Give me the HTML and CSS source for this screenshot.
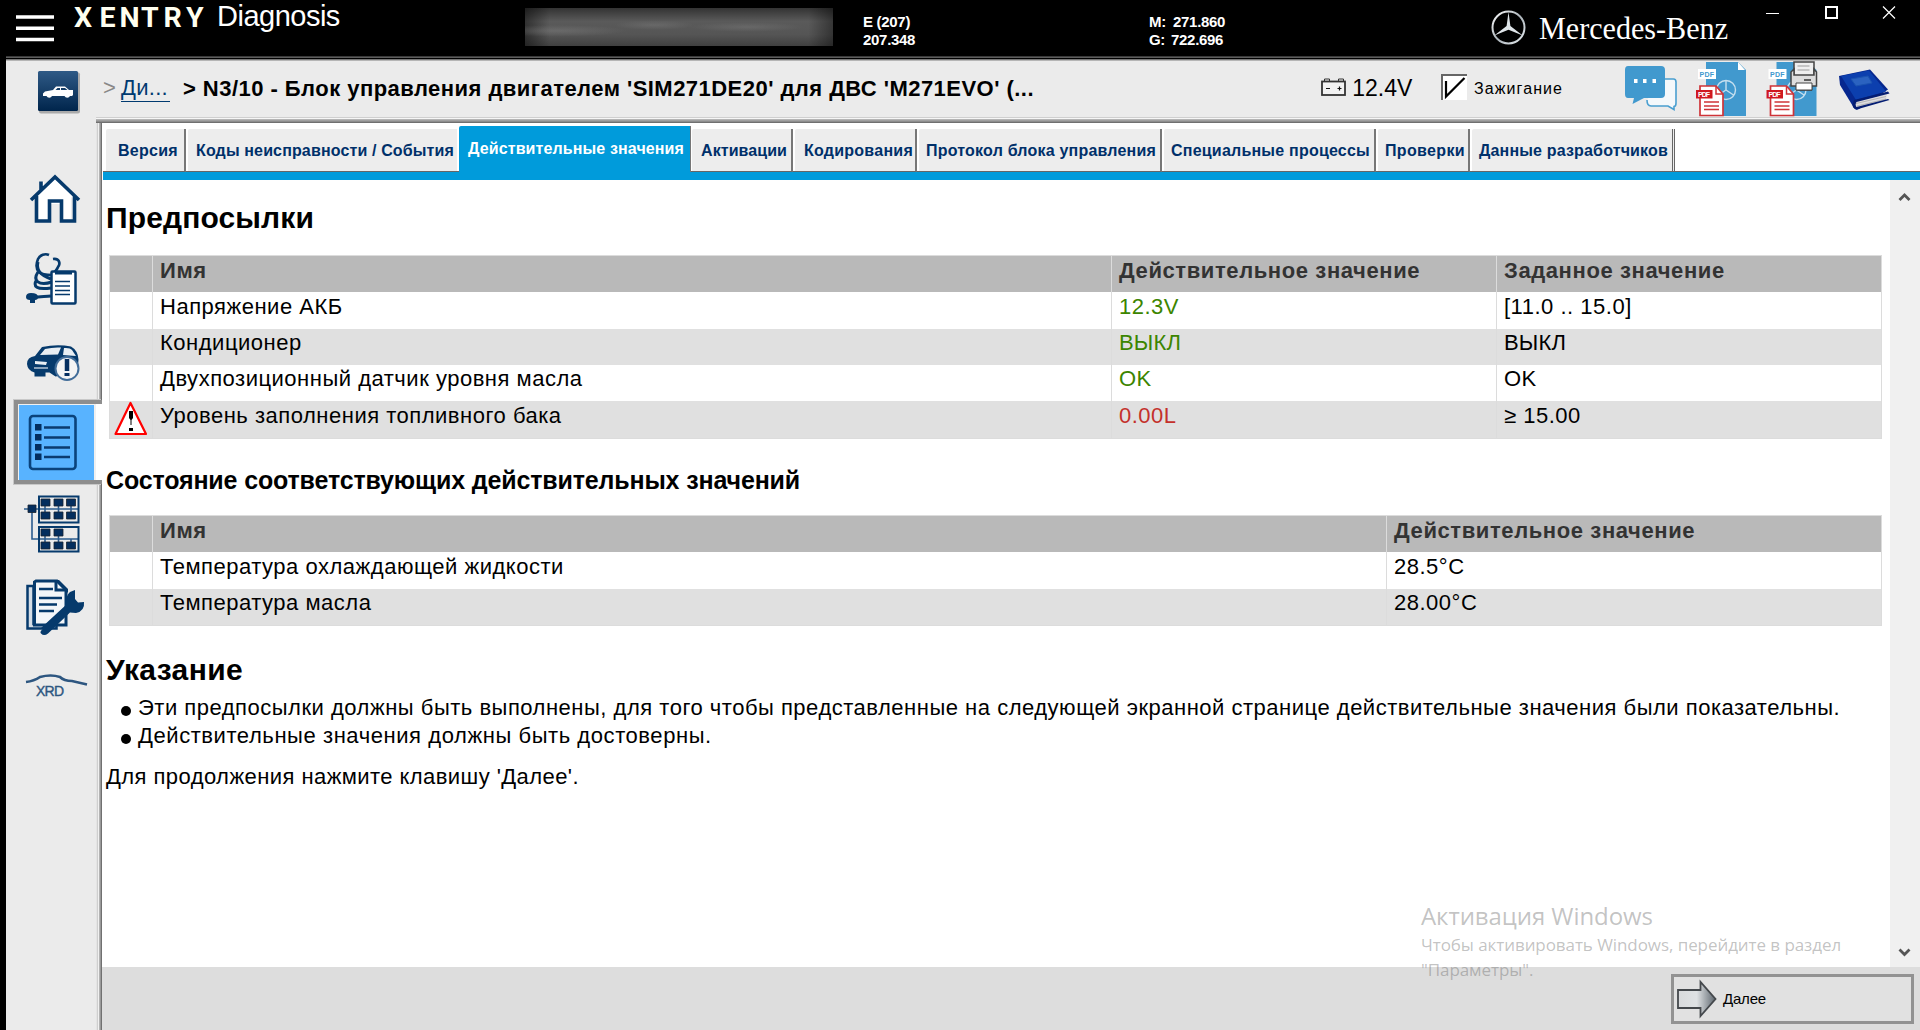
FILE: index.html
```html
<!DOCTYPE html>
<html lang="ru">
<head>
<meta charset="utf-8">
<title>XENTRY Diagnosis</title>
<link rel="stylesheet" href="styles.css">
</head>
<body>
<header class="topbar">
  <svg class="brand" width="213" height="56" viewBox="0 0 213 56">
    <path d="M16 17h38M16 28.3h38M16 39.5h38" stroke="#fff" stroke-width="3.4"/>
    <text class="xentry" y="26.5" x="74 99.5 119.5 141 163.5 186">XENTRY</text>
  </svg>
  <span class="product">Diagnosis</span>
  <span class="redacted"></span>
  <div class="vehicle">E (207)<br>207.348</div>
  <div class="aggregates"><span class="key">M:</span>271.860<br><span class="key g">G:</span>722.696</div>
  <svg class="maker" width="246" height="56" viewBox="1485 0 246 56">
    <defs><linearGradient id="ring" x1="0" y1="0" x2="1" y2="1"><stop offset="0" stop-color="#fff"/><stop offset=".5" stop-color="#aab2b8"/><stop offset="1" stop-color="#e8eef2"/></linearGradient></defs>
    <circle cx="1508.500" cy="27.500" r="16" fill="none" stroke="url(#ring)" stroke-width="2"/>
    <path d="M1508.500 12l1.900 14 12.300 9.500-14.200-5.800-14.200 5.800 12.300-9.500z" fill="#dfe5e9"/>
    <text class="mb" x="1539" y="38.500" textLength="189" lengthAdjust="spacingAndGlyphs">Mercedes-Benz</text>
  </svg>
  <svg class="winbtns" width="160" height="56" viewBox="1760 0 160 56">
    <path d="M1766 13.500h13" stroke="#fff"/>
    <rect x="1826" y="7" width="11" height="11" fill="none" stroke="#fff" stroke-width="2"/>
    <path d="M1883 6.500l12 12M1895 6.500l-12 12" stroke="#fff" stroke-width="1.200"/>
  </svg>
</header>
<div class="shell">
  <div class="crumbs">
    <svg class="carbtn" width="90" height="56" viewBox="6 61 90 56">
      <defs><linearGradient id="cb" x1="0" y1="0" x2="0" y2="1"><stop offset="0" stop-color="#2f5a86"/><stop offset="1" stop-color="#00254c"/></linearGradient></defs>
      <rect x="39" y="72.500" width="41" height="41" rx="2" fill="#aaa"/>
      <rect x="38" y="71" width="40" height="40" rx="1.500" fill="url(#cb)"/>
      <path d="M43 96v-2.500l2-2 8-1.500 3-3.500h9l4 3.500h4v5l-1 1h-2a3 3 0 0 1-5.500 0H52a3 3 0 0 1-5.500 0z" fill="#fff"/>
      <path d="M55.500 90l2-2h2.500v2zM61 88h4l2.500 2H61z" fill="#123c66"/>
    </svg>
    <span class="sep">&gt;</span><a class="crumb-link">Ди...</a>
    <span class="crumb-current">&gt; N3/10 - Блок управления двигателем 'SIM271DE20' для ДВС 'M271EVO' (...</span>
    <svg class="battery" width="28" height="20" viewBox="1320 78 28 20">
      <path d="M1324.500 81v-2h5v2M1338.500 81v-2h5v2" fill="none" stroke="#333"/>
      <rect x="1322" y="81.500" width="23" height="13.500" fill="#f2f2f2" stroke="#333" stroke-width="1.800"/>
      <path d="M1326 88.500h4M1337.500 88.500h4M1339.500 86.500v4" stroke="#111" stroke-width="1.200"/>
    </svg>
    <span class="volt">12.4V</span>
    <svg class="check" width="28" height="28" viewBox="1440 73 28 28">
      <rect x="1441" y="74" width="26" height="26" fill="#fff"/>
      <path d="M1442 100V75H1467" fill="none" stroke="#666" stroke-width="2"/>
      <path d="M1446 81v15.500L1464.500 78" fill="none" stroke="#000" stroke-width="2.200"/>
    </svg>
    <span class="ign">Зажигание</span>
    <svg class="tools" width="300" height="56" viewBox="1620 61 300 56">
      <path d="M1663 79h10.500q2.500 0 2.500 3v21q0 3.500-2 3.500v3l-6-3.500h-17q-4 0-4-6" fill="#f4f8fb" stroke="#4a9fd0" stroke-width="1.600"/>
      <path d="M1628 66h33q4 0 4 4v24q0 4-4 4h-17l-11.500 6 1.500-6h-6q-3 0-3-4V70q0-4 3-4z" fill="#4199ce"/>
      <path d="M1634 79h3.500v4h-3.500zM1643 79h3.500v4h-3.500zM1652.500 79h3.500v4h-3.500z" fill="#fff"/>
      <g id="report">
        <path d="M1706 62h32l8 8v46h-40z" fill="#4199ce"/>
        <path d="M1738 62v8h7z" fill="#fff"/>
        <circle cx="1726" cy="90" r="9.500" fill="none" stroke="#c5dfef" stroke-width="1.400"/>
        <path d="M1726 81v9l-7.500 5M1726 90l7.500 5" fill="none" stroke="#c5dfef" stroke-width="1.400"/>
        <path d="M1698 69h18v10h-18z" fill="#fff"/>
        <text x="1699.500" y="76.500" class="pdf blue" textLength="14.500">PDF</text>
        <path d="M1700 86h16l7 8v21.500h-23z" fill="#fff" stroke="#cf3439" stroke-width="1.700"/>
        <path d="M1716 86v8h7" fill="none" stroke="#cf3439" stroke-width="1.500"/>
        <path d="M1696 90h16.500v8.500H1696z" fill="#d01820"/>
        <text x="1698" y="97" class="pdf" textLength="12">PDF</text>
        <path d="M1704 102h15M1704 106h15M1704 109.500h15" stroke="#cf3439" stroke-width="1.500"/>
      </g>
      <use href="#report" x="70.500"/>
      <path d="M1794 62h20v17h-20z" fill="#eee" stroke="#444" stroke-width="1.500"/>
      <path d="M1797.500 66h12M1797.500 70h12" stroke="#999" stroke-width="1.200"/>
      <path d="M1794 69v6h20v-6l2.500 3v14h-5v4h-15v-4h-5.500V72z" fill="#ddd" stroke="#444" stroke-width="1.500"/>
      <path d="M1796 83h16v7h-16z" fill="#fff" stroke="#444"/><path d="M1804 80h7" stroke="#333" stroke-width="1.500"/>
      <path d="M1839 76l31-6.500 18 20-29 19.500q-3 2-5-1l-14-23z" fill="#06278f"/>
      <path d="M1841 76l28-5.500 17 21-30 8.500z" fill="#0c3fae"/>
      <path d="M1851 79l17-3 4 7-16 3z" fill="#2b62c0" stroke="#1b53b0"/>
      <path d="M1856 101l31-7-1 6-29 8q-3-3-1-7z" fill="#dcdce0"/>
      <path d="M1856 103.500l30-7M1857 106l29-7" stroke="#aaa" stroke-width=".8"/>
      <path d="M1854 100l34-8.500 1.500 2-33 8.500q-2 3 0 5l31.500-8 1.500 1-33 9.500q-4-1-4-5z" fill="#041d72"/>
    </svg>
  </div>
  <div class="body">
    <nav class="side">
      <svg height="82" viewBox="6 158 90 82"><path d="M40 192v-10h4v6l11-11 20 20-1.500 2-2.500-2v24H61.500v-17h-12v17H36.500v-24L32 200l-1-1.500z" fill="#fff"/><path d="M31 200l24-23 24 23M41 190v-8.500M36.500 196v25h13V201h12v20h13V196" fill="none" stroke="#063a6c" stroke-width="3.600"/></svg>
      <svg height="82" viewBox="6 240 90 82"><g fill="none" stroke="#063a6c"><path d="M49 255c-4-2-9 0-11 4-2 5-2 10 1 13 3 3 8 3 13 3" stroke-width="2.600"/><path d="M53 259c6-1 8 4 5 8-1 3-3 4-4 6" stroke-width="2.600"/><path d="M38 262c-2 8 2 13 13 17M38 272c-6 9 1 14 14 10M37 279c-5 8 0 11 14 9M34 298c5-2 11-1 17-2" stroke-width="3"/></g><path d="M26 297q0-4 5-4 7 0 7 4 0 3-3 3v3h-5v-3q-4 0-4-3z" fill="#063a6c"/><rect x="51.500" y="271.500" width="24" height="32" rx="1" fill="#fff" stroke="#063a6c" stroke-width="2.500"/><path d="M55 271h17v3.500H55z" fill="#063a6c"/><path d="M55 281.500h15M55 286h15M55 290.500h15M55 294.500h15" stroke="#063a6c" stroke-width="1.500"/></svg>
      <svg height="75" viewBox="6 322 90 75"><path d="M27 364q0-7 8-8l7-9q15-3 29-.5 7 4 7.500 13l-1 13-22 4-6-4h-4v4h-11v-4q-7-2-7.500-8.500z" fill="#063a6c"/><path d="M40 355l5-6q8-2 16-1.500l-3 7zM64 348q6-.5 8 2l4 6-13-1zM35 361l12 1-1 3-11-1z" fill="#e8eef3"/><path d="M34 368h14" stroke="#dfe7ee" stroke-width="1.200"/><circle cx="67" cy="368.500" r="11.500" fill="#f4f4f4" stroke="#426d99" stroke-width="2"/><path d="M67 359v12" stroke="#062f60" stroke-width="4.500"/><path d="M64.500 374.500h5" stroke="#062f60" stroke-width="3"/></svg>
      <div class="selected"><svg width="75" height="75" viewBox="19 405 75 75"><rect x="30" y="416" width="45.500" height="53" rx="3" fill="none" stroke="#0a437c" stroke-width="2.600"/><path d="M35 424h6.500v6.500H35zM35 434h6.500v6.500H35zM35 444h6.500v6.500H35zM35 453.500h6.500v6.500H35z" fill="#042e5e"/><path d="M44 427.500h26M44 437.500h26M44 447.500h26M44 457h26" stroke="#0a3b70" stroke-width="2.600"/></svg></div>
      <svg height="82" viewBox="6 487 90 82"><path d="M24 509h54M32 509v30h46M45 500v14M58.500 500v14M71 500v14M45 530v14M58.500 530v14M71 539v5" stroke="#2d5d8f" stroke-width="1.600" fill="none"/><g fill="none" stroke="#063a6c" stroke-width="2"><rect x="39" y="496.500" width="39.500" height="26"/><rect x="39" y="527" width="39.500" height="24.500"/></g><path d="M28 505h8v7.500h-8zM41 499h9v7h-9zM54 499h9v7h-9zM66.500 499h9v7h-9zM41 512h9v7h-9zM54 512h9v7h-9zM66.500 512h9v7h-9zM41 529h9v7h-9zM54 529h9v7h-9zM41 542h9v7h-9zM54 542h9v7h-9zM66.500 542h9v7h-9z" fill="#042e5e" stroke="#1a2530" stroke-width=".8"/></svg>
      <svg height="82" viewBox="6 569 90 82"><path d="M27.500 586h6v38h23v4.500h-29z" fill="#d4dde6" stroke="#063a6c" stroke-width="2.500"/><path d="M36 581h21l9 9v35H34.500V582z" fill="#f3f6f9" stroke="#063a6c" stroke-width="3"/><path d="M55 580l13 13v-4l-9-9z" fill="#063a6c"/><path d="M56 580v10h10" fill="none" stroke="#063a6c" stroke-width="3"/><path d="M39 589h14M39 598h23M39 604.500h18M39 611h15" stroke="#063a6c" stroke-width="2.400"/><path d="M41 628l26-24q-2-8 3-12l5-2v9l3 3.500 6-.5q1 9-8 11l-6-.5-22 21q-4 3-7 0-2-2 3-5.500z" fill="#063a6c"/></svg>
      <svg height="82" viewBox="6 651 90 82"><path d="M26 682q8-1 14-5 11-3 20 0 4 4 12 4l15 3.500" fill="none" stroke="#2d5680" stroke-width="2.600"/><text class="xrd" x="36" y="696" textLength="28">XRD</text></svg>
    </nav>
    <main class="panel">
      <div class="tabs">
        <a class="tab t1">Версия</a><a class="tab t2">Коды неисправности / События</a><a class="tab active">Действительные значения</a><a class="tab t4">Активации</a><a class="tab t5">Кодирования</a><a class="tab t6">Протокол блока управления</a><a class="tab t7">Специальные процессы</a><a class="tab t8">Проверки</a><a class="tab t9">Данные разработчиков</a>
      </div>
      <div class="view">
        <div class="content">
          <h1>Предпосылки</h1>
          <table class="grid">
            <colgroup><col class="c-icon"><col class="c-name"><col class="c-val"><col></colgroup>
            <tr class="head"><th></th><th>Имя</th><th>Действительное значение</th><th>Заданное значение</th></tr>
            <tr class="tall"><td></td><td>Напряжение АКБ</td><td class="ok">12.3V</td><td>[11.0 .. 15.0]</td></tr>
            <tr class="alt"><td></td><td>Кондиционер</td><td class="ok caps">ВЫКЛ</td><td class="caps">ВЫКЛ</td></tr>
            <tr><td></td><td>Двухпозиционный датчик уровня масла</td><td class="ok">OK</td><td>OK</td></tr>
            <tr class="alt tall"><td class="warn"><svg width="36" height="36" viewBox="113 401 36 36"><path d="M130.500 403L146 434H115.500z" fill="#fff" stroke="#f00" stroke-width="2.200" stroke-linejoin="round"/><path d="M129 411h4v7l-1.500 2v5h-1v-5l-1.500-2zM129 428h4v3h-4z" fill="#000"/></svg></td><td>Уровень заполнения топливного бака</td><td class="bad">0.00L</td><td>≥ 15.00</td></tr>
          </table>
          <h2>Состояние соответствующих действительных значений</h2>
          <table class="grid">
            <colgroup><col class="c-icon"><col class="c-wide"><col></colgroup>
            <tr class="head"><th></th><th>Имя</th><th>Действительное значение</th></tr>
            <tr class="tall"><td></td><td>Температура охлаждающей жидкости</td><td>28.5°C</td></tr>
            <tr class="alt"><td></td><td>Температура масла</td><td>28.00°C</td></tr>
          </table>
          <h1 class="note">Указание</h1>
          <ul>
            <li>Эти предпосылки должны быть выполнены, для того чтобы представленные на следующей экранной странице действительные значения были показательны.</li>
            <li class="second">Действительные значения должны быть достоверны.</li>
          </ul>
          <p>Для продолжения нажмите клавишу 'Далее'.</p>
        </div>
        <div class="scroll">
          <svg width="30" height="30" viewBox="0 0 30 30"><path d="M9.500 20l5-5 5 5" fill="none" stroke="#555" stroke-width="2.800"/></svg>
          <svg width="30" height="30" viewBox="0 0 30 30"><path d="M9.500 12.500l5 5 5-5" fill="none" stroke="#555" stroke-width="2.800"/></svg>
        </div>
      </div>
      <footer class="foot">
        <button class="next"><svg width="42" height="42" viewBox="1675 978 42 42"><defs><linearGradient id="ar"><stop offset="0" stop-color="#d8dadc"/><stop offset=".5" stop-color="#dfe2e4"/><stop offset="1" stop-color="#5d666e"/></linearGradient></defs><path d="M1678 990h22.500v-8l15 17-15 17v-8H1678z" fill="url(#ar)" stroke="#44484c" stroke-width="1.800"/></svg><span>Далее</span></button>
      </footer>
    </main>
  </div>
</div>
<div class="activation"><div class="big">Активация Windows</div>Чтобы активировать Windows, перейдите в раздел<br>"Параметры".</div>
</body>
</html>
```
FILE: styles.css
```css
* { box-sizing: border-box; }
body {
  margin: 0; width: 1920px; height: 1030px; overflow: hidden;
  background: #000; color: #000; position: relative;
  font-family: "Liberation Sans", Arial, sans-serif;
  display: flex; flex-direction: column;
}
svg { display: block; flex: none; overflow: visible; }
h1, h2, p, ul { margin: 0; padding: 0; }

.topbar { height: 56px; display: flex; color: #fff; flex: none; }
.xentry { font: bold 28.5px Roboto, sans-serif; fill: #fffff0; }
.product { width: 312px; padding-left: 4px; font-size: 29px; letter-spacing: -0.5px; line-height: 33px; }
.redacted {
  width: 308px; height: 38px; margin-top: 8px;
  background:
    radial-gradient(ellipse at 10% 60%, rgba(150, 150, 150, .3), transparent 18%),
    radial-gradient(ellipse at 42% 45%, rgba(150, 150, 150, .25), transparent 16%),
    radial-gradient(ellipse at 72% 50%, rgba(150, 150, 150, .25), transparent 18%),
    linear-gradient(to right, rgba(0, 0, 0, .45), transparent 8% 92%, rgba(0, 0, 0, .4)),
    linear-gradient(#333, #5a5a5a 35%, #555 70%, #404040);
}
.vehicle, .aggregates { font-weight: bold; font-size: 15px; line-height: 18px; padding-top: 13px; letter-spacing: -0.3px; }
.vehicle { width: 286px; margin-left: 30px; }
.aggregates { width: 336px; }
.key { display: inline-block; width: 24px; }
.key.g { width: 22px; }
.mb { font: 32px "Liberation Serif", serif; fill: #fff; }
.winbtns { margin-left: auto; }

.shell { flex: 1; margin-left: 6px; display: flex; flex-direction: column; background: #ebebeb; min-height: 0; }
.crumbs {
  height: 61px; flex: none; display: flex; align-items: flex-start; padding-top: 5px;
  background: linear-gradient(#3a3a3a 1px, #5c5c5c 1px 2px, #000 2px 3px, #777 3px 4px, #b5b5b5 4px 5px, #ebebeb 5px);
  line-height: 56px; font-size: 22px; white-space: nowrap;
}
.sep { color: #888; width: 18px; margin-left: 7px; line-height: 54px; }
.crumb-link { width: 49px; color: #003a70; line-height: 24px; margin-top: 15px; height: 26px; border-bottom: 1px solid #003a70; letter-spacing: .3px; }
.crumb-current { font-weight: bold; width: 1138px; margin-left: 13px; letter-spacing: .464px; }
.battery { margin-top: 17px; }
.volt { width: 92px; padding-left: 4px; line-height: 54px; font-size: 23px; }
.check { margin: 12px 0 0; }
.ign { width: 146px; padding-left: 6px; font-size: 16px; margin-right: 6px; letter-spacing: 1.08px; }

.body { flex: 1; display: flex; min-height: 0; }
.side {
  width: 96px; flex: none; padding-top: 41px; display: flex; flex-direction: column;
  background: linear-gradient(to right, #ebebeb 90px, #e4e4e4 90px 91px, #cfcfcf 91px 92px, #f0f0f0 92px 93px, #b4b4b4 93px 94px, #999 94px 95px, #707070 95px);
}
.side > svg { width: 90px; }
.selected {
  height: 84px; flex: none; margin: 3px 0 3px 8px; background: linear-gradient(to right, #f0f0f0 78px, #fff 78px);
  border: solid #8e8e8e; border-width: 4px 0 4px 4px;
  padding: 1px 0 0 1px; box-shadow: -1px -1px #c8c8c8, -1px 1px #c8c8c8;
}
.selected svg { background: #58b3ff; }

.panel { flex: 1; display: flex; flex-direction: column; background: #fff; min-width: 0; }
.panel::before {
  content: ""; height: 6px; margin-left: -6px; flex: none;
  background: linear-gradient(#cfcfcf 1px, #f6f6f6 1px 2px, #b4b4b4 2px 3px, #a0a0a0 3px 4px, #8c8c8c 4px 5px, #707070 5px);
}
.tabs {
  height: 57px; flex: none; display: flex; align-items: flex-end; padding: 0 0 8px 3px; margin-left: 1px;
  background: linear-gradient(transparent 48px, #666 48px 49px, #009bdb 49px);
  font-weight: bold; font-size: 16px; color: #00306a; white-space: nowrap;
}
.tab { height: 43px; line-height: 43px; background: #ededed; border-right: 2px solid #777; border-bottom: 1px solid #666; border-radius: 2px 0 0 0; margin-right: 2px; }
.t1 { width: 80px; padding-left: 12px; letter-spacing: .25px; }
.t2 { width: 269px; padding-left: 8px; border-right: 0; letter-spacing: .14px; }
.active { width: 232px; padding-left: 9px; background: #009bdb; color: #fff; height: 46px; line-height: 45px; border-bottom: 0; border-right-width: 1px; margin-right: 1px; letter-spacing: .118px; }
.t4 { width: 101px; padding-left: 9px; letter-spacing: .08px; }
.t5 { width: 122px; padding-left: 9px; letter-spacing: .25px; }
.t6 { width: 243px; padding-left: 7px; letter-spacing: .203px; }
.t7 { width: 212px; padding-left: 7px; letter-spacing: .222px; }
.t8 { width: 92px; padding-left: 7px; letter-spacing: .35px; }
.t9 { width: 203px; padding-left: 7px; border-right: 3px double #666; letter-spacing: .163px; }

.view { flex: 1; display: flex; min-height: 0; }
.content { flex: 1; padding-left: 4px; font-size: 22px; letter-spacing: .51px; }
h1 { font-size: 30px; line-height: 75px; height: 75px; letter-spacing: .138px; }
h1.note { height: 68px; padding-top: 19px; line-height: 49px; letter-spacing: .37px; }
h2 { font-size: 25px; height: 76px; padding-top: 7px; line-height: 69px; letter-spacing: -.153px; }
.grid {
  width: 1773px; margin-left: 3px; table-layout: fixed; border-spacing: 0; border-collapse: separate;
  border: 1px solid #dcdcdc;
}
.c-icon { width: 42px; }
.c-name { width: 959px; }
.c-val { width: 385px; }
.c-wide { width: 1234px; }
tr { height: 36px; }
tr.tall { height: 37px; }
td, th { padding: 0 0 0 7px; text-align: left; vertical-align: top; line-height: 27px; }
td + td, th + th { border-left: 1px solid #dcdcdc; }
tr.tall td { line-height: 29px; }
.head th { line-height: 29px; letter-spacing: .6px; }
.head { background: #b9b9b9; color: #333; }
.alt { background: #e0e0e0; }
.ok { color: #3c8500; }
.bad { color: #c4302b; }
.caps { letter-spacing: .15px; }
td.warn { padding: 0 0 0 3px; }
ul { list-style: none; }
li { height: 28px; line-height: 30px; display: flex; align-items: center; white-space: nowrap; }
li.second { letter-spacing: .57px; }
li::before { content: ""; width: 10px; height: 10px; border-radius: 50%; background: #000; margin: 5px 7px 0 15px; flex: none; }
p { padding-top: 12px; line-height: 30px; letter-spacing: .43px; }
.scroll { width: 30px; background: #f0f0f0; display: flex; flex-direction: column; justify-content: space-between; }

.foot { height: 63px; flex: none; background: #ddd; display: flex; justify-content: flex-end; padding: 7px 6px 0 0; }
.next {
  width: 243px; height: 50px; border: 3px solid #929292; background: #e1e1e1; padding: 0 0 0 1px;
  display: flex; align-items: center; font: 15px "Liberation Sans", sans-serif; color: #000; gap: 6px; letter-spacing: -.2px;
}
.next span { padding-bottom: 2px; }
.activation {
  position: absolute; left: 1421px; top: 899px; color: rgba(110, 110, 110, .42);
  font: 17px/25px "Open Sans", sans-serif; white-space: nowrap; letter-spacing: -.07px;
}
.big { font-size: 24px; line-height: 33px; }
.xrd { font-size: 14px; fill: #2d5680; stroke: #2d5680; stroke-width: .4; }
.pdf { font: bold 7px "Liberation Sans", sans-serif; fill: #fff; }
.pdf.blue { fill: #4199ce; }
```
